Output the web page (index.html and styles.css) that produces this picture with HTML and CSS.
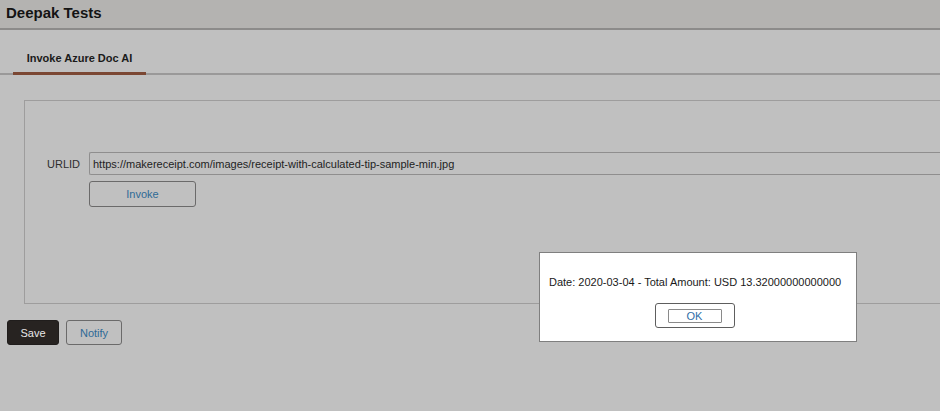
FILE: index.html
```html
<!DOCTYPE html>
<html lang="en">
<head>
    <meta charset="UTF-8">
    <meta name="viewport" content="width=device-width, initial-scale=1.0">
    <title>Deepak Tests</title>
    <link rel="stylesheet" href="styles.css">
</head>
<body>

    <div class="page-header">
        <h1>Deepak Tests</h1>
    </div>

    <div class="tabs">
        <div class="tab active">Invoke Azure Doc AI</div>
    </div>

    <div class="main-content">
        <div class="group-box">
            <div class="field-row">
                <label for="urlid">URLID</label>
                <input id="urlid" type="text" value="https://makereceipt.com/images/receipt-with-calculated-tip-sample-min.jpg">
            </div>
            <div class="field-row">
                <span class="spacer"></span>
                <button class="btn invoke-btn">Invoke</button>
            </div>
        </div>

        <div class="button-bar">
            <button class="btn save-btn">Save</button>
            <button class="btn notify-btn">Notify</button>
        </div>
    </div>

    <div class="modal">
        <p>Date: 2020-03-04 - Total Amount: USD 13.32000000000000</p>
        <div class="modal-actions">
            <button class="ok-btn"><span>OK</span></button>
        </div>
    </div>

</body>
</html>
```

FILE: styles.css
```css
* {
    margin: 0;
    padding: 0;
    box-sizing: border-box;
    font-family: "Liberation Sans", Arial, sans-serif;
}

body {
    width: 940px;
    height: 411px;
    overflow: hidden;
    background-color: #c0c0c0;
    color: #1a1a1a;
    position: relative;
}

.page-header {
    height: 30px;
    background-color: #b4b3b1;
    border-bottom: 2px solid #8c8b8a;
    padding: 4px 6px 0;
}

.page-header h1 {
    font-size: 15px;
    font-weight: bold;
    color: #141414;
    line-height: 18px;
}

.tabs {
    height: 45px;
    border-bottom: 2px solid #9a9999;
    padding-left: 13px;
    display: flex;
    align-items: flex-end;
}

.tab {
    width: 133px;
    height: 44px;
    padding-top: 21px;
    text-align: center;
    font-size: 11px;
    font-weight: bold;
    color: #1a1a1a;
    border-bottom: 3px solid #7b4733;
    margin-bottom: -2px;
}

.main-content {
    padding: 25px 0 0 24px;
}

.group-box {
    width: 916px;
    height: 204px;
    border: 1px solid #9e9d9d;
    border-right: none;
    padding: 51px 0 0 22px;
}

.field-row {
    display: flex;
    align-items: center;
    margin-bottom: 6px;
}

.field-row label,
.field-row .spacer {
    width: 42px;
    flex-shrink: 0;
    font-size: 11px;
    color: #2e2e2e;
}

.field-row input {
    flex: 1;
    height: 23px;
    border: 1px solid #8f8e8e;
    border-right: none;
    border-radius: 2px 0 0 2px;
    background: #c0c0c0;
    padding-left: 3px;
    font-size: 11px;
    color: #1e1e1e;
}

.btn {
    height: 26px;
    border-radius: 3px;
    font-size: 11px;
    cursor: pointer;
}

.invoke-btn {
    width: 107px;
    border: 1px solid #6b6a6a;
    background: #c0c0c0;
    color: #2f6a96;
}

.button-bar {
    display: flex;
    gap: 7px;
    margin: 16px 0 0 -17px;
}

.save-btn {
    width: 52px;
    height: 25px;
    border: 1px solid #201d1c;
    background: #272321;
    color: #e8e8e8;
}

.notify-btn {
    width: 56px;
    height: 25px;
    border: 1px solid #6b6a6a;
    background: #c0c0c0;
    color: #2f6a96;
}

.modal {
    position: absolute;
    left: 539px;
    top: 252px;
    width: 318px;
    height: 90px;
    background: #ffffff;
    border: 1px solid #7f7f7f;
    padding: 22px 0 0 9px;
}

.modal p {
    font-size: 11px;
    line-height: 14px;
    color: #1a1a1a;
}

.modal-actions {
    display: flex;
    justify-content: center;
    margin-top: 14px;
    padding-right: 16px;
}

.ok-btn {
    width: 80px;
    height: 25px;
    border: 1px solid #5e5e5e;
    border-radius: 3px;
    background: #ffffff;
    display: flex;
    align-items: center;
    justify-content: center;
    cursor: pointer;
}

.ok-btn span {
    display: block;
    width: 54px;
    height: 14px;
    border: 1px solid #8a8a8a;
    border-radius: 1px;
    font-size: 11px;
    line-height: 12px;
    color: #2f6ea8;
}
```
